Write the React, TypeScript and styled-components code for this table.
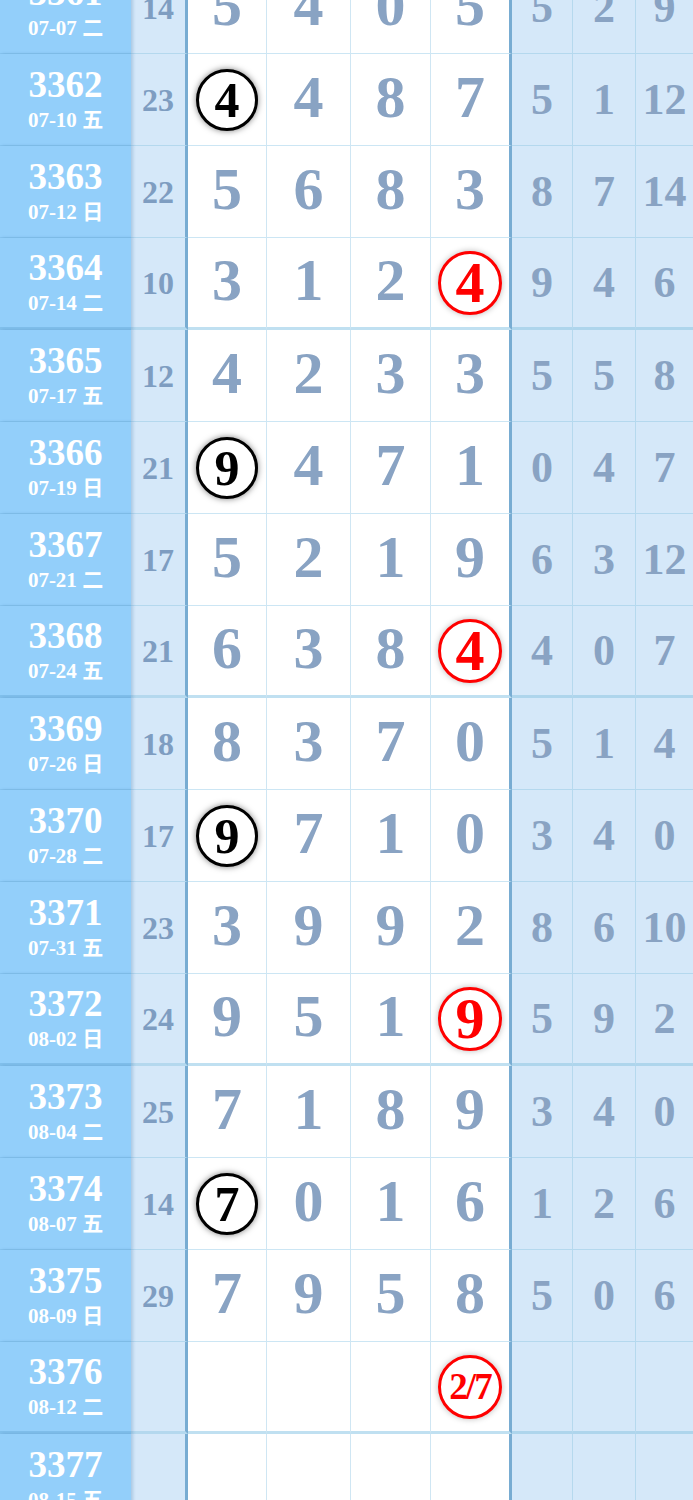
import React from "react";
import styled, { createGlobalStyle } from "styled-components";

const GlobalStyle = createGlobalStyle`
  html, body { margin: 0; padding: 0; background: #ffffff; overflow: hidden; }
  body { font-family: "Liberation Serif", "Noto Sans CJK SC", serif; }
`;

type Mark = { i: number; c: "black" | "red"; v?: string };
type RowData = {
  no: string;
  date: string;
  wd: string;
  sum?: string;
  main: string[];
  side: string[];
  mark?: Mark;
};

const rows: RowData[] = [
  { no: "3361", date: "07-07", wd: "二", sum: "14", main: ["5", "4", "0", "5"], side: ["5", "2", "9"] },
  { no: "3362", date: "07-10", wd: "五", sum: "23", main: ["4", "4", "8", "7"], side: ["5", "1", "12"], mark: { i: 0, c: "black" } },
  { no: "3363", date: "07-12", wd: "日", sum: "22", main: ["5", "6", "8", "3"], side: ["8", "7", "14"] },
  { no: "3364", date: "07-14", wd: "二", sum: "10", main: ["3", "1", "2", "4"], side: ["9", "4", "6"], mark: { i: 3, c: "red" } },
  { no: "3365", date: "07-17", wd: "五", sum: "12", main: ["4", "2", "3", "3"], side: ["5", "5", "8"] },
  { no: "3366", date: "07-19", wd: "日", sum: "21", main: ["9", "4", "7", "1"], side: ["0", "4", "7"], mark: { i: 0, c: "black" } },
  { no: "3367", date: "07-21", wd: "二", sum: "17", main: ["5", "2", "1", "9"], side: ["6", "3", "12"] },
  { no: "3368", date: "07-24", wd: "五", sum: "21", main: ["6", "3", "8", "4"], side: ["4", "0", "7"], mark: { i: 3, c: "red" } },
  { no: "3369", date: "07-26", wd: "日", sum: "18", main: ["8", "3", "7", "0"], side: ["5", "1", "4"] },
  { no: "3370", date: "07-28", wd: "二", sum: "17", main: ["9", "7", "1", "0"], side: ["3", "4", "0"], mark: { i: 0, c: "black" } },
  { no: "3371", date: "07-31", wd: "五", sum: "23", main: ["3", "9", "9", "2"], side: ["8", "6", "10"] },
  { no: "3372", date: "08-02", wd: "日", sum: "24", main: ["9", "5", "1", "9"], side: ["5", "9", "2"], mark: { i: 3, c: "red" } },
  { no: "3373", date: "08-04", wd: "二", sum: "25", main: ["7", "1", "8", "9"], side: ["3", "4", "0"] },
  { no: "3374", date: "08-07", wd: "五", sum: "14", main: ["7", "0", "1", "6"], side: ["1", "2", "6"], mark: { i: 0, c: "black" } },
  { no: "3375", date: "08-09", wd: "日", sum: "29", main: ["7", "9", "5", "8"], side: ["5", "0", "6"] },
  { no: "3376", date: "08-12", wd: "二", main: ["", "", "", "2/7"], side: ["", "", ""], mark: { i: 3, c: "red", v: "2/7" } },
  { no: "3377", date: "08-15", wd: "五", main: ["", "", "", ""], side: ["", "", ""] },
];

const THICK = "#78acd2";

const Table = styled.div`
  width: 693px;
  margin-top: -38px;
`;

const Row = styled.div`
  display: grid;
  grid-template-columns: 131px 57px 79px 84px 80px 81px 61px 63px 57px;
  height: 92px;
`;

const CellBase = styled.div<{ $end: boolean }>`
  box-sizing: border-box;
  height: 92px;
  display: flex;
  align-items: center;
  justify-content: center;
  font-weight: 700;
  line-height: 1;
  border-bottom-style: solid;
  border-bottom-width: ${(p) => (p.$end ? "3px" : "1px")};
`;

const IssueCell = styled(CellBase)`
  position: relative;
  z-index: 1;
  flex-direction: column;
  background: #93cffa;
  color: #ffffff;
  border-bottom-color: ${(p) => (p.$end ? "#80bfeb" : "#86c4ef")};
  box-shadow: 2px 0 3px rgba(60, 120, 170, 0.28);
  padding-bottom: 2px;
`;

const IssueNo = styled.div`
  font-size: 37px;
  line-height: 37px;
`;

const IssueDate = styled.div`
  font-size: 21px;
  line-height: 22px;
  margin-top: 6px;
  white-space: nowrap;
`;

const SumCell = styled(CellBase)`
  background: #d5e8f9;
  color: #7e9dc1;
  font-size: 32px;
  border-right: 3px solid ${THICK};
  border-bottom-color: #b4d8ee;
`;

const MainCell = styled(CellBase)<{ $last: boolean }>`
  background: #ffffff;
  color: #89a3c3;
  font-size: 60px;
  padding-bottom: 6px;
  border-right: ${(p) => (p.$last ? `3px solid ${THICK}` : "1px solid #cfe6f3")};
  border-bottom-color: ${(p) => (p.$end ? "#c0e0f1" : "#cce6f4")};
`;

const SideCell = styled(CellBase)<{ $last: boolean }>`
  background: #d5e8f9;
  color: #89a3c3;
  font-size: 44px;
  border-right: ${(p) => (p.$last ? "none" : "1px solid #b6d9ee")};
  border-bottom-color: ${(p) => (p.$end ? "#aed5ec" : "#b4d8ee")};
`;

const Circle = styled.span<{ $red: boolean; $small?: boolean }>`
  box-sizing: border-box;
  display: flex;
  align-items: center;
  justify-content: center;
  width: ${(p) => (p.$red ? "64px" : "62px")};
  height: ${(p) => (p.$red ? "64px" : "62px")};
  margin-top: 6px;
  border-radius: 50%;
  border: 3px solid ${(p) => (p.$red ? "#ff0000" : "#000000")};
  background: #ffffff;
  color: ${(p) => (p.$red ? "#ff0000" : "#000000")};
  box-shadow: 0 0 6px ${(p) => (p.$red ? "rgba(0,0,0,0.28)" : "rgba(0,0,0,0.5)")};
  font-size: ${(p) => (p.$small ? "37px" : p.$red ? "58px" : "50px")};
  letter-spacing: ${(p) => (p.$small ? "-2px" : "0")};
  line-height: 1;
  font-weight: 700;
`;

export default function App() {
  return (
    <>
      <GlobalStyle />
      <Table>
        {rows.map((r, ri) => {
          const end = ri % 4 === 3;
          return (
            <Row key={r.no}>
              <IssueCell $end={end}>
                <IssueNo>{r.no}</IssueNo>
                <IssueDate>
                  {r.date} {r.wd}
                </IssueDate>
              </IssueCell>
              <SumCell $end={end}>{r.sum ?? ""}</SumCell>
              {r.main.map((d, i) => (
                <MainCell key={i} $end={end} $last={i === 3}>
                  {r.mark && r.mark.i === i ? (
                    <Circle $red={r.mark.c === "red"} $small={!!r.mark.v}>
                      {r.mark.v ?? d}
                    </Circle>
                  ) : (
                    d
                  )}
                </MainCell>
              ))}
              {r.side.map((d, i) => (
                <SideCell key={i} $end={end} $last={i === 2}>
                  {d}
                </SideCell>
              ))}
            </Row>
          );
        })}
      </Table>
    </>
  );
}
